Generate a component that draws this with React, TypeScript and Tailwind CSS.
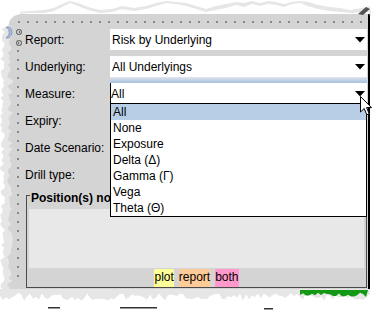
import React from "react";

// seeded random so the torn paper edge is the same on every render
const rnd = (seed: number) => {
  let s = seed;
  return () => {
    s = (s * 9301 + 49297) % 233280;
    return s / 233280;
  };
};

const leftEdge = (seed: number, min: number, amp: number) => {
  const r = rnd(seed);
  const pts: string[] = [];
  for (let y = 14; y <= 292; y += 3) pts.push(`${(min + r() * amp).toFixed(1)},${y}`);
  return pts.join(" ");
};

const bottomEdge = (seed: number, x0: number, x1: number, min: number, amp: number) => {
  const r = rnd(seed);
  const pts: string[] = [];
  for (let x = x0; x <= x1; x += 3) pts.push(`${x},${(min + r() * amp).toFixed(1)}`);
  return pts.join(" ");
};

const Arrow = () => (
  <svg width="10" height="6" viewBox="0 0 10 6" className="shrink-0">
    <polygon points="0,0 10,0 5,5.5" fill="#000" />
  </svg>
);

const Combo = ({ value, focused }: { value: string; focused?: boolean }) => (
  <div
    className={`w-[257px] h-[21px] bg-white flex items-center justify-between pr-[2px] ${
      focused ? "border-l border-black pl-0" : "pl-[2px]"
    }`}
  >
    <span className="leading-[14px]">{value}</span>
    <Arrow />
  </div>
);

const Row = ({ label, value, focused }: { label: string; value: string; focused?: boolean }) => (
  <div className="flex h-[21px] items-center">
    <span className="w-[85px] leading-[14px]">{label}</span>
    <Combo value={value} focused={focused} />
  </div>
);

const Dot = () => <span className="block w-[2px] h-[2px] rounded-full bg-[#6e6e6e] shrink-0" />;

const measures = ["All", "None", "Exposure", "Delta (Δ)", "Gamma (Γ)", "Vega", "Theta (Θ)"];

export default function App() {
  return (
    <div className="relative w-[374px] h-[315px] bg-white overflow-hidden text-[12px] text-black font-['Liberation_Sans',Arial,sans-serif]">
      {/* main panel */}
      <div className="mt-[14px] w-[370px] h-[276px] bg-[#d4d4d4] border-r-2 border-black flex flex-col">
        <div className="h-[15px] pt-[7px] pl-[18px] flex gap-[7px]">
          {Array.from({ length: 39 }).map((_, i) => (
            <Dot key={i} />
          ))}
        </div>

        <div className="flex">
          {/* left gutter */}
          <div className="w-[25px] pl-[16px] flex flex-col">
            <svg width="6" height="6" viewBox="0 0 6 6">
              <circle cx="3" cy="3" r="2.4" fill="#fff" stroke="#6a6a6a" strokeWidth="1.2" />
              <polygon points="2,3 4,1.8 4,4.2" fill="#555" />
            </svg>
            <svg width="6" height="6" viewBox="0 0 6 6" className="mt-[5px]">
              <circle cx="3" cy="3" r="2.4" fill="#fff" stroke="#6a6a6a" strokeWidth="1.2" />
              <polygon points="4,3 2,1.8 2,4.2" fill="#555" />
            </svg>
            <div className="mt-[4px] pl-[1px] flex flex-col gap-[7px]">
              {Array.from({ length: 26 }).map((_, i) => (
                <Dot key={i} />
              ))}
            </div>
          </div>

          {/* form */}
          <div className="w-[343px] flex flex-col">
            <Row label="Report:" value="Risk by Underlying" />
            <div className="mt-[6px]">
              <Row label="Underlying:" value="All Underlyings" />
            </div>
            <div className="h-[6px] ml-[85px] w-[257px] bg-linear-to-b from-[#dfe6ef] to-[#a7bfdc]" />
            <Row label="Measure:" value="All" focused />
            {/* these combos sit under the open list */}
            <div className="mt-[6px]">
              <Row label="Expiry:" value="" />
            </div>
            <div className="mt-[6px]">
              <Row label="Date Scenario:" value="" />
            </div>
            <div className="mt-[6px]">
              <Row label="Drill type:" value="" />
            </div>

            {/* group box */}
            <div className="mt-[10px] ml-[1px] w-[341px] border-l border-r border-b border-[#4a4a4a] flex flex-col">
              <div className="h-[14px] flex items-start">
                <span className="w-[3px] h-px bg-[#4a4a4a]" />
                <span className="-mt-[4px] ml-px font-bold leading-[14px] whitespace-nowrap">Position(s) not</span>
              </div>
              <div className="mx-[2px] h-[59px] bg-[#e8e8e8]" />
              <div className="h-[19px] pt-px flex justify-center gap-[5px] leading-[16px]">
                <span className="bg-[#ffff99]">plot</span>
                <span className="bg-[#ffcc99]">report</span>
                <span className="bg-[#ff99cc]">both</span>
              </div>
            </div>
          </div>
        </div>
      </div>

      {/* open Measure list */}
      <div className="absolute left-[110px] top-[103px] w-[257px] h-[114px] border border-black bg-white flex flex-col">
        {measures.map((m, i) => (
          <div key={m} className={`h-[16px] leading-[16px] pl-[2px] ${i === 0 ? "bg-[#b8cee6]" : ""}`}>
            {m}
          </div>
        ))}
      </div>

      {/* torn paper edges */}
      <svg className="absolute left-0 top-0" width="374" height="315" viewBox="0 0 374 315">
        {/* top */}
        <polygon
          points="0,0 374,0 374,16 370,16 368,9 362,12 352,13 340,12 330,11 318,9 308,6 300,3 292,4 284,7 276,5 268,4 260,6 252,4 244,7 236,5 226,8 216,10 206,12 196,9 186,6 176,4 166,3 156,6 146,9 134,11 122,9 112,12 100,13 88,10 78,6 70,3 62,7 54,11 44,13 30,13 18,14 0,14"
          fill="#e6e6e6"
        />
        <polygon
          points="0,0 374,0 374,16 371,16 370,6 362,8 350,10 340,8 330,7 318,5 308,2 300,1 292,2 284,4 276,2 268,1 260,3 252,1 244,3 236,2 226,4 216,6 206,9 196,6 186,3 176,2 166,1 156,3 146,6 134,8 122,6 112,9 100,10 88,7 78,3 70,1 62,4 54,8 44,10 30,11 18,12 0,12"
          fill="#fff"
        />
        {/* left */}
        <polygon points={`0,0 16,0 ${leftEdge(7, 7, 6)} 0,315`} fill="#e6e6e6" />
        <polygon points={`0,0 10,0 ${leftEdge(3, 0, 5)} 0,315`} fill="#fff" />
        <polygon points="0,0 22,0 20,14 14,16 10,20 8,26 0,30" fill="#fff" />
        {/* bottom */}
        <polygon points={`0,289 370,289 ${bottomEdge(11, 370, 372, 292, 2)} ${bottomEdge(5, 0, 370, 293, 8).split(" ").reverse().join(" ")}`} fill="#e6e6e6" />
        <polygon points={`0,315 374,315 374,291 ${bottomEdge(5, 0, 372, 293, 8).split(" ").reverse().join(" ")}`} fill="#fff" />
        <polygon points={`300,290 368,290 ${bottomEdge(9, 300, 368, 292, 5).split(" ").reverse().join(" ")}`} fill="#149914" />
        <rect x="48" y="307" width="12" height="1.5" fill="#333" />
        <rect x="120" y="307" width="37" height="1.5" fill="#333" />
        <rect x="264" y="308" width="9" height="1.5" fill="#333" />
        {/* page curl at top right */}
        <polygon points="358,14 366,7 370,9 363,15" fill="#555" />
        {/* tab at top left */}
        <path d="M6,27 Q13,32 6,38 L9,38 Q15,32 9,27 Z" fill="#a9bde0" stroke="#7d8fb8" strokeWidth="0.8" />
      </svg>

      {/* mouse pointer */}
      <svg className="absolute left-[360px] top-[96px]" width="13" height="21" viewBox="0 0 13 21">
        <path d="M0.5,0.5 L0.5,16 L4.2,12.5 L6.8,18.8 L9.2,17.8 L6.6,11.6 L11.5,11.6 Z" fill="#fff" stroke="#000" strokeWidth="1" />
      </svg>
    </div>
  );
}
